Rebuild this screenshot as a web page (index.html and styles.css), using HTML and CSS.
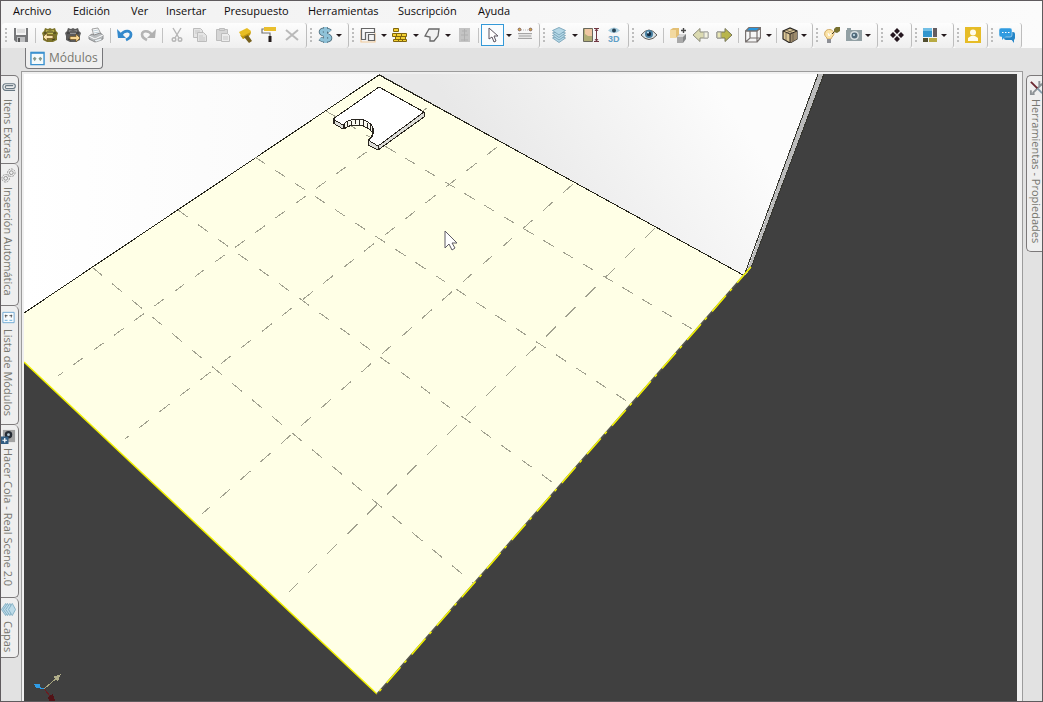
FILE: index.html
```html
<!DOCTYPE html>
<html lang="es">
<head>
<meta charset="utf-8">
<title>Módulos</title>
<link rel="stylesheet" href="styles.css">
</head>
<body>
<div class="window">
  <nav class="menu" aria-label="Menú principal">
    <button>Archivo</button><button>Edición</button><button>Ver</button><button>Insertar</button><button>Presupuesto</button><button>Herramientas</button><button>Suscripción</button><button>Ayuda</button>
  </nav>

  <div class="toolbar">
    <div class="group">
      <button class="tool" aria-label="Guardar"><svg viewBox="0 0 16 16"><path d="M1 1h14v14H3l-2-2z" fill="#77787a"/><path d="M3 1h10v7H3z" fill="#f4f4f4"/><path d="M4 3h8M4 5h8" stroke="#c8c8c8"/><path d="M4 10h8v5H4z" fill="#bdbec0"/><path d="M5 11h2v4H5z" fill="#555"/></svg></button>
      <i class="sep"></i>
      <button class="tool" aria-label="Importar módulo"><svg viewBox="0 0 16 16"><path d="M0 6l2-2 1-3 3 1 2-1 2 1 3-1 1 3 2 2-1 3v4l-4 2H5l-4-2V9z" fill="#7d752b"/><path d="M4 3l4 1 4-1-1 4H5z" fill="#c9bf59"/><path d="M2 6h3M14 6h-3M5 5h6M10 13l3-1" stroke="#3f3b1c" fill="none"/><path d="M1 10l4-4v2.500h6v3H5V14z" fill="#f8e4ae" stroke="#735520" stroke-width=".7"/></svg></button>
      <button class="tool" aria-label="Exportar módulo"><svg viewBox="0 0 16 16"><path d="M0 6l2-2 1-3 3 1 2-1 2 1 3-1 1 3 2 2-1 3v4l-4 2H5l-4-2V9z" fill="#5b5b5b"/><path d="M4 3l4 1 4-1-1 4H5z" fill="#929292"/><path d="M2 6h3M14 6h-3M5 5h6M3 12l3 1" stroke="#333" fill="none"/><path d="M15 11l-4-4v2.500H5v3h6V15z" fill="#f8d893" stroke="#735520" stroke-width=".7"/></svg></button>
      <button class="tool" aria-label="Imprimir"><svg viewBox="0 0 16 16"><path d="M4 2l6-1 3 6-7 2z" fill="#fafafa" stroke="#8a8a8a" stroke-width=".8"/><path d="M1 9l3-2 2 1 6-2 3 2v4l-8 3-6-3z" fill="#b9bdbf" stroke="#77797b" stroke-width=".8"/><path d="M1 9l6 3 8-4" fill="none" stroke="#fff"/><path d="M6 13l7-2 1 2-6 2z" fill="#e9f1f5" stroke="#888" stroke-width=".5"/><path d="M5 4l5-1M6 6l5-1" stroke="#c0d0d8"/></svg></button>
      <i class="sep"></i>
      <button class="tool" aria-label="Deshacer"><svg viewBox="0 0 16 16"><path d="M4 8c3-5 10-5 10-.5 0 3-2 4-5 5.500" fill="none" stroke="#3489cc" stroke-width="2.800"/><path d="M0 2l1 9h8z" fill="#3489cc"/></svg></button>
      <button class="tool" aria-label="Rehacer"><svg viewBox="0 0 16 16"><path d="M12 8C9 3 2 3 2 7.500c0 3 2 4 5 5.500" fill="none" stroke="#b4b4b4" stroke-width="2.600"/><path d="M16 2l-1 9H7z" fill="#b0b0b0"/></svg></button>
      <i class="sep"></i>
      <button class="tool" aria-label="Cortar"><svg viewBox="0 0 16 16" fill="none" stroke="#b6b6b6" stroke-width="1.400"><path d="M4 1l6 10M12 1L6 11"/><circle cx="5" cy="12.500" r="1.800"/><circle cx="11" cy="12.500" r="1.800"/></svg></button>
      <button class="tool" aria-label="Copiar"><svg viewBox="0 0 16 16" fill="#e4e4e4" stroke="#bcbcbc"><path d="M1.500 1.500h7l2 2v7h-9z"/><path d="M5.500 5.500h6l3 3v6h-9z"/><path d="M3 4h5M3 6h2M7 9h4M7 11h6M7 13h6" stroke="#c8c8c8"/></svg></button>
      <button class="tool" aria-label="Pegar"><svg viewBox="0 0 16 16" fill="#d6d6d6" stroke="#bdbdbd"><path d="M1.500 2.500h11v11h-11z"/><path d="M4.500 1.500h5v2h-5z"/><path d="M6.500 6.500h6l2 2v6h-8z" fill="#ececec"/><path d="M8 10h5M8 12h5" stroke="#c8c8c8"/></svg></button>
      <button class="tool" aria-label="Brocha"><svg viewBox="0 0 16 16"><path d="M1 5l8-4 4 3-1 4-7 4z" fill="#e7bd23"/><path d="M2 8l3 4 7-4 1-3-8 4z" fill="#c1970f"/><path d="M6 10l4-2 4 6-3 2z" fill="#76601d"/></svg></button>
      <button class="tool" aria-label="Rodillo"><svg viewBox="0 0 16 16"><path d="M3 0h12v4H3z" fill="#e9bf2e"/><path d="M3 2H1v4h8v3" fill="none" stroke="#737373" stroke-width="1.200"/><path d="M7.500 9h3v6h-3z" fill="#231b1b"/></svg></button>
      <button class="tool" aria-label="Eliminar"><svg viewBox="0 0 16 16"><path d="M2 3l12 10M14 3L2 13" stroke="#b9b9b9" stroke-width="2"/></svg></button>
    </div>
    <div class="group">
      <button class="tool tight" aria-label="Presupuesto"><svg viewBox="0 0 16 16"><path d="M13 4.500C11 2 4 2 4 5c0 3.500 9 2 9 6 0 3-7 3-10 .5M8.500 0v16" fill="none" stroke="#4d6b7b" stroke-width="4.600"/><path d="M13 4.500C11 2 4 2 4 5c0 3.500 9 2 9 6 0 3-7 3-10 .5M8.500 0v16" fill="none" stroke="#8fc2d8" stroke-width="3"/></svg></button><button class="caret start" aria-label="Opciones de presupuesto"></button>
    </div>
    <div class="group">
      <button class="tool" aria-label="Paredes"><svg viewBox="0 0 16 16" fill="none" stroke="#666" stroke-width="1.200"><path d="M1 3v12h5M4 15h11V6" stroke="#f0c99a"/><path d="M1.500 12.500v-11h13v4h-9v7z"/><path d="M8.500 7.500h6v6h-6z"/></svg></button><button class="caret" aria-label="Tipos de pared"></button>
      <button class="tool" aria-label="Ladrillos"><svg viewBox="0 0 16 16" fill="#f2cf32" stroke="#80650d"><path d="M1.500 1.500h5v3h-5zM.5 6.500h4v3h-4zM4.500 6.500h5v3h-5zM9.500 9.500v-3h5v3zM3.500 9.500h5v3h-5zM8.500 9.500h5v3h-5zM1.500 12.500h5v2h-5zM6.500 12.500h4v2h-4zM10.500 12.500h4v2h-4z"/></svg></button><button class="caret" aria-label="Tipos de ladrillo"></button>
      <button class="tool" aria-label="Polígono"><svg viewBox="0 0 16 16"><path d="M5 2h10l-1 7-4 5H6V10L1 9z" fill="#f1f1f1" stroke="#686868" stroke-width="1.300"/></svg></button><button class="caret" aria-label="Tipos de polígono"></button>
      <button class="tool" aria-label="Puerta"><svg viewBox="0 0 16 16"><path d="M3 1h11v14H3z" fill="#c4c4c4"/><path d="M8.500 2v12M5 8h7M5 13h7M6 4h5" stroke="#b0b0b0"/></svg></button>
      <i class="sep"></i>
      <button class="tool selected" aria-label="Seleccionar"><svg viewBox="0 0 16 16"><path d="M4 1v11l3-2 2 5 2-1-2-5h4z" fill="#fff" stroke="#5b5560"/></svg></button><button class="caret" aria-label="Tipos de selección"></button>
      <button class="tool" aria-label="Medir"><svg viewBox="0 0 16 16"><path d="M1 6h14v6H1z" fill="#e5e5e5"/><path d="M1 11.500h14M1 6.500h14M3 8v2M5 8v2M7 8v2M9 8v2M11 8v2M13 8v2" stroke="#a5a5a5"/><path d="M4 3h8" stroke="#bbb" stroke-dasharray="1 1"/><circle cx="2.500" cy="2.500" r="1.400" fill="#d4ae47" stroke="#75505a" stroke-width=".8"/><circle cx="13.500" cy="2.500" r="1.400" fill="#d4ae47" stroke="#75505a" stroke-width=".8"/></svg></button>
    </div>
    <div class="group">
      <button class="tool" aria-label="Capas"><svg viewBox="0 0 16 16" fill="#b4d7e6" stroke="#6e9cb2" stroke-width=".8"><path d="M1.500 11L8 8l6.500 3L8 15.500z"/><path d="M1.500 8.500L8 6l6.500 2.500L8 13z"/><path d="M1.500 6L8 4l6.500 2L8 10.500z"/><path d="M1.500 3.500L8 .5l6.500 3L8 8z"/></svg></button><button class="caret" aria-label="Lista de capas"></button>
      <button class="tool" aria-label="Altura"><svg viewBox="0 0 16 16"><path d="M.5 1.500h9v13h-9z" fill="#b0ad76" stroke="#69685c"/><path d="M2 2h7v7H5L2 7z" fill="#f0c7a3"/><path d="M11 1.500h5M11 14.500h5M13.500 2v12M12 4l1.500-2L15 4M12 12l1.500 2L15 12" fill="none" stroke="#713843"/></svg></button>
      <button class="tool" aria-label="Vista 3D"><svg viewBox="0 0 16 16"><path d="M2 3.500q6-6 12 0-6 5-12 0z" fill="#a9cdde"/><circle cx="8" cy="3.500" r="2" fill="#274253"/><text class="icon-text" x="2" y="15">3D</text></svg></button>
    </div>
    <div class="group wide">
      <button class="tool" aria-label="Ver"><svg viewBox="0 0 16 16"><path d="M0 8q8-10 16 0-8 9-16 0z" fill="#dce5e9" stroke="#615d59"/><circle cx="8" cy="7" r="4" fill="#477fa1"/><circle cx="8" cy="7" r="2.200" fill="#162d42"/><circle cx="7" cy="5.500" r="1" fill="#d4f0ff"/></svg></button>
      <i class="sep"></i>
      <button class="tool" aria-label="Intercambiar módulos"><svg viewBox="0 0 16 16"><path d="M0 3l3-2h6v7l-3 3H0z" fill="#e3bf74"/><path d="M0 3h6v8H0z" fill="#f2d9a0"/><path d="M7 10l3-3h6v5l-3 4H7z" fill="#858788"/><path d="M7 10l3-3h6l-3 3z" fill="#d7d7d7"/><path d="M7 10h6v6H7z" fill="#aaa"/><path d="M13.500 1v5M11 3.500h5" stroke="#474747" stroke-width="1.400"/></svg></button>
      <button class="tool" aria-label="Anterior"><svg viewBox="0 0 16 16"><path d="M0 8l7-6.500V5h8v6H7v3.500z" fill="#dbdab1" stroke="#8b8b7a"/><path d="M11 5h4v6h-4z" fill="#f3f2df" stroke="#aaa"/></svg></button>
      <button class="tool" aria-label="Siguiente"><svg viewBox="0 0 16 16"><path d="M16 8L9 1.500V5H1v6h8v3.500z" fill="#b8b54c" stroke="#767658"/><path d="M1 5h4v6H1z" fill="#e9e7b4" stroke="#999"/></svg></button>
      <i class="sep"></i>
      <button class="tool" aria-label="Perspectiva"><svg viewBox="0 0 16 16" fill="none" stroke="#77716f" stroke-width="1.200"><path d="M4 .5h11.500L12 4H.5z" fill="#2996dc"/><path d="M.6 4H12v11H.6zM12 4l3.500-3.500V11L12 15M.6 15L5 11h10M5 11V4"/></svg></button><button class="caret" aria-label="Tipos de perspectiva"></button>
      <i class="sep"></i>
      <button class="tool tight" aria-label="Caja"><svg viewBox="0 0 16 16"><path d="M1 4l7-3 7 3v8l-7 4-7-4z" fill="#dcc898" stroke="#282522" stroke-width="1.200"/><path d="M8 7l7-3v8l-7 4z" fill="#9c8a6c"/><path d="M1 4l7 3 7-3M8 7v9" fill="none" stroke="#2f2923"/><path d="M4 3l7 3v8M12 3L4 6v8" fill="none" stroke="#5b5042" stroke-width=".7"/></svg></button><button class="caret start" aria-label="Tipos de caja"></button>
    </div>
    <div class="group">
      <button class="tool" aria-label="Iluminación"><svg viewBox="0 0 16 16"><path d="M3 11C1 9 0 8 1 5c2-4 8-3 9 1 0 3-2 3-3 6H3z" fill="#fbe3a7" stroke="#d0aa65"/><path d="M3 12h4v4H3z" fill="#8d8f96"/><path d="M4 6l1 3 2-3" fill="none" stroke="#fff"/><path d="M8 7l3-3" stroke="#443e25"/><path d="M10 2l2-2h4v4l-3 2-3-1z" fill="#77702f"/></svg></button>
      <button class="tool tight" aria-label="Cámara"><svg viewBox="0 0 16 16"><path d="M0 3h1V1h4v2h11v11H0z" fill="#92a0a4"/><circle cx="8.500" cy="8.500" r="4.500" fill="#d9e0e3"/><circle cx="8.500" cy="8.500" r="3" fill="#526b7b"/><circle cx="8" cy="8" r="1" fill="#d2ebf6"/></svg></button><button class="caret start" aria-label="Opciones de cámara"></button>
    </div>
    <div class="group">
      <button class="tool" aria-label="Componentes"><svg viewBox="0 0 16 16" fill="#24161f"><path d="M8 1l3 3-3 3-3-3zM8 9l3 3-3 3-3-3zM4 5l3 3-3 3-3-3zM12 5l3 3-3 3-3-3z"/></svg></button>
    </div>
    <div class="group">
      <button class="tool tight" aria-label="Disposición"><svg viewBox="0 0 16 16"><path d="M1 1h9v9H1z" fill="#3296ce"/><path d="M1 1h9v3H1z" fill="#72bfe5"/><path d="M11 1h4v9h-4z" fill="#635c60"/><path d="M1 11h5v4H1z" fill="#524e30"/><path d="M7 11h8v4H7z" fill="#b7aa43"/></svg></button><button class="caret start" aria-label="Tipos de disposición"></button>
    </div>
    <div class="group">
      <button class="tool" aria-label="Usuario"><svg viewBox="0 0 16 16"><path d="M0 0h16v16H0z" fill="#e6bc27"/><circle cx="8" cy="5.500" r="3" fill="#fffbea"/><path d="M3 14v-3l3-2h4l3 2v3z" fill="#fffbea"/></svg></button>
    </div>
    <div class="group">
      <button class="tool" aria-label="Mensajes"><svg viewBox="0 0 16 16"><rect x="5" y="5" width="11" height="8" rx="2" fill="#2485c7"/><path d="M12 12l3 4v-5z" fill="#2485c7"/><rect x="0" y="1" width="13" height="9" rx="2" fill="#309be0" stroke="#f3f8fb" stroke-width=".5"/><path d="M3 9v4l4-4z" fill="#309be0"/><path d="M3 5.500h1.500M6 5.500h1.500M9 5.500h1.500" stroke="#fff" stroke-width="1.200"/></svg></button>
    </div>
  </div>

  <div class="tabstrip">
    <button class="doc-tab"><svg viewBox="0 0 16 16"><path d="M1 1.500h14v13H1z" fill="#f4fafb" stroke="#3a91cf" stroke-width="1.500"/><path d="M1 2h14" stroke="#3a91cf" stroke-width="2"/><path d="M5 6l-2 2 2 3zM5 6l2 2-2 3zM11 6L9 8l2 3zM11 6l2 2-2 3z" fill="#87998c"/></svg>Módulos</button>
  </div>

  <div class="body">
    <aside class="side left">
      <button class="side-tab items"><svg viewBox="0 0 16 16" fill="none" stroke="#687883" stroke-width="1.200"><path d="M15 11H5c-4 0-4-7 0-7h8c3 0 3 5 0 5H6c-2 0-2-3 0-3h7"/></svg>Itens Extras</button>
      <button class="side-tab auto"><svg viewBox="0 0 16 16" fill="none" stroke="#8d8d8d"><circle cx="11" cy="5" r="4" stroke-dasharray="2 1"/><circle cx="11" cy="5" r="2"/><circle cx="5" cy="11" r="4" stroke-dasharray="2 1"/><circle cx="5" cy="11" r="2"/></svg>Inserción Automática</button>
      <button class="side-tab modules"><svg viewBox="0 0 16 16"><path d="M2 2.500h12v11H2z" fill="#f8fbfd" stroke="#70a9d3"/><path d="M5 5v3M11 5v3M4 6h3M9 6h3" stroke="#555"/><path d="M4 11h3M9 11h3" stroke="#61aad8"/></svg>Lista de Módulos</button>
      <button class="side-tab queue"><svg viewBox="0 0 16 16"><path d="M2 1h13v13H2z" fill="#a2a2a2"/><circle cx="8" cy="6" r="4" fill="#252b34"/><circle cx="8" cy="6" r="1.500" fill="#b7cad5"/><path d="M0 8h8v8H0z" fill="#315d83"/><path d="M4 9.500v5M1.500 12h5" stroke="#fff" stroke-width="1.300"/></svg>Hacer Cola - Real Scene 2.0</button>
      <button class="side-tab layers"><svg viewBox="0 0 16 16" fill="#bedbe8" stroke="#72a4bc" stroke-width=".8"><path d="M5 1.500L8 8l-3 6.500L.5 8z"/><path d="M7 1.500L10 8l-3 6.500L2.500 8z"/><path d="M9.500 1.500l3 6.500-3 6.500L5 8z"/><path d="M12 1.500L15.500 8 12 14.500 8 8z"/></svg>Capas</button>
    </aside>

    <main class="frame">
      <svg class="scene" viewBox="24 74 993 627" preserveAspectRatio="xMidYMid slice" shape-rendering="crispEdges" role="img" aria-label="Plano de la habitación">
        <defs>
          <linearGradient id="wall-r" gradientUnits="userSpaceOnUse" x1="480" y1="150" x2="670" y2="20"><stop offset="0" stop-color="#e8e8e8"/><stop offset=".55" stop-color="#f3f3f3"/><stop offset="1" stop-color="#fcfcfc"/></linearGradient>
          <linearGradient id="wall-l" x1="0" x2="1"><stop offset="0" stop-color="#fff"/><stop offset="1" stop-color="#f9f9f9"/></linearGradient>
        </defs>
        <path d="M0 0h1100v800H0z" fill="#404040"/>
        <path d="M24 74h355v2L24 313z" fill="url(#wall-l)"/>
        <path d="M379 74h439l-73 202z" fill="url(#wall-r)"/>
        <path d="M379 75l366 201 6-9-374 427L24 362v-49z" fill="#ffffe6"/>
        <path d="M818 74h6l-73 194-6 8z" fill="#bcbcbc"/>
        <path d="M818 74l-74 202" fill="none" stroke="#35352e"/>
        <path d="M824 74l-73 194" fill="none" stroke="#35352e"/>
        <path d="M24 313L379 75l366 201" fill="none" stroke="#25251b"/>
        <g fill="none" stroke="#a1a18f">
          <path d="M326 111l368 219" stroke-dasharray="12 11"/>
          <path d="M255 157l373 245" stroke-dasharray="12 12"/>
          <path d="M178 210l374 272" stroke-dasharray="12 13"/>
          <path d="M92 267l381 316" stroke-dasharray="13 13"/>
          <path d="M427 108L58 376" stroke-dasharray="12 13"/>
          <path d="M497 147L125 439" stroke-dasharray="13 13"/>
          <path d="M573 184L202 514" stroke-dasharray="13 14"/>
          <path d="M655 228L289 592" stroke-dasharray="14 14"/>
        </g>
        <g fill="none" shape-rendering="auto">
          <path d="M24 362l353 332" stroke="#f0f000" stroke-width="1.500"/>
          <path d="M751 267L377 694" stroke="#55554a" stroke-width="1.500"/>
          <path d="M751 267L377 694" stroke="#f4f400" stroke-width="1.500" stroke-dasharray="21 8 3 6"/>
        </g>
        <g stroke="#29251f" stroke-linejoin="round">
          <path d="M379 87l45 25v5l-46 33-10-5v-5l3-3c5-8-3-16-14-15-6 0-13 2-14 6v1l-10-6v-4z" fill="#deded9"/>
          <path d="M379 87l45 25-46 34-10-6c6-3 6-9 5-12-5-12-25-10-30-3l-10-6z" fill="#fff"/>
          <path d="M378 146v4M424 112v5M334 119v4M343 125v4" fill="none"/>
          <path d="M344 124c5-6 22-8 29 3l-1 5c-6-8-21-9-28-3z" fill="#f8f8ef"/>
          <path d="M347 122v5M351 121v4M355 120v4M359 120v5M363 121v5M367 123v5M370 125v6" fill="none"/>
        </g>
        <path d="M445 231v17l4-4 3 6 3-2-3-5h5z" fill="#fff" stroke="#5e5b64" shape-rendering="auto"/>
        <g fill="none"><path d="M44 689l14-12" stroke="#a9a780"/><path d="M44 689l-7-2" stroke="#2f9be4"/><path d="M44 689l7 8" stroke="#6b1c21"/></g>
        <path d="M61 674l-3 7-5-4z" fill="#b0ad89"/><path d="M34 684h6v4h-4z" fill="#2f9be4"/><path d="M53 694l2 7h-6l-1-4z" fill="#521317"/>
      </svg>
    </main>

    <aside class="side right">
      <button class="side-tab properties"><svg viewBox="0 0 16 16" fill="none"><path d="M4 14L14 4M11 1v4h4M2 11v4h4" stroke="#8d9296" stroke-width="2"/><path d="M2 2l7 7" stroke="#6b2831" stroke-width="2"/><path d="M9 9l5 5" stroke="#849aaa" stroke-width="2"/></svg>Herramientas - Propiedades</button>
    </aside>
  </div>
</div>
</body>
</html>
```

FILE: styles.css
```css
* { box-sizing: border-box; }
html, body { height: 100%; margin: 0; }
body { font: 11px/16px "Open Sans", "Noto Sans", sans-serif; color: #241f20; }
button { margin: 0; padding: 0; border: 0; background: none; font: inherit; color: inherit; }
svg { display: block; }

.window {
  display: flex;
  flex-direction: column;
  height: 100vh;
  overflow: hidden;
  border: 1px solid #5f5b5e;
  background: #e2e2e2;
}

.menu {
  display: grid;
  grid-template-columns: 60px 58px 35px 58px 84px 90px 80px 1fr;
  flex: none;
  height: 22px;
  padding-left: 12px;
  background: linear-gradient(90deg, #f1f1f1, #fbfbfb);
}
.menu button { text-align: left; white-space: nowrap; padding-bottom: 2px; color: #0d0a0b; }

.toolbar {
  display: flex;
  flex: none;
  height: 25px;
  padding-left: 1px;
  background: linear-gradient(90deg, #f1f1f1, #fbfbfb);
}
.group {
  display: flex;
  align-items: center;
  flex: none;
  padding-right: 3px;
  padding-bottom: 1px;
  border-right: 1px solid #bdbdbd;
  border-radius: 3px;
  background: linear-gradient(#fdfdfd, #efefef);
}
.group::before {
  content: "";
  width: 2px;
  height: 14px;
  margin: 0 2px 0 3px;
  background: repeating-linear-gradient(#bdbdbd 0 2px, transparent 2px 4px);
}
.group.wide { padding-right: 2px; }
.group.wide::before { margin-right: 3px; }
.tool { display: grid; place-items: center; width: 23px; height: 22px; }
.tool svg { width: 16px; height: 16px; }
.tool.tight { width: 22px; }
.tool.selected { border: 1px solid #3399d8; background: #f9fcfe; }
.caret { display: flex; align-items: center; justify-content: center; width: 9px; height: 22px; }
.caret.start { justify-content: flex-start; }
.caret::before { content: ""; border: 3px solid transparent; border-top-color: #241a1d; border-bottom: 0; }
.sep { width: 1px; height: 15px; margin: 0 2px 0 3px; background: #c2c2c2; }
.icon-text { font: bold 9px "Liberation Sans", sans-serif; fill: #5f9fc7; }

.tabstrip { flex: none; height: 23px; padding-left: 24px; }
.doc-tab {
  display: flex;
  align-items: center;
  gap: 4px;
  height: 21px;
  padding: 0 4px;
  border: 1px solid #77777a;
  border-top: 0;
  border-radius: 0 0 4px 4px;
  background: #efefef;
  color: #77776f;
  font-size: 12px;
}
.doc-tab svg { width: 15px; height: 15px; }

.body { display: flex; flex: 1; min-height: 0; }
.side { display: flex; flex-direction: column; flex: none; padding-top: 4px; overflow: hidden; }
.left { width: 20px; }
.right { width: 19px; padding-left: 3px; }
.side-tab {
  display: flex;
  align-items: center;
  flex: none;
  gap: 4px;
  width: 18px;
  padding: 4px 3px 4px 0;
  border: 1px solid #7c797a;
  border-left: 0;
  border-radius: 0 5px 5px 0;
  background: #efefef;
  color: #77776f;
  writing-mode: vertical-rl;
  white-space: nowrap;
  line-height: 14px;
}
.side-tab + .side-tab { border-top: 0; }
.side-tab svg { flex: none; width: 15px; height: 15px; }
.items { height: 89px; }
.auto { height: 142px; }
.modules { height: 119px; }
.queue { height: 173px; }
.layers { height: 60px; }
.properties {
  height: 177px;
  padding: 4px 0 4px 1px;
  border-left: 1px solid #7c797a;
  border-right: 0;
  border-radius: 5px 0 0 5px;
}

.frame {
  flex: 1;
  min-width: 0;
  padding: 2px 5px 0 2px;
  border: 1px solid #9c9c9c;
  border-bottom: 0;
  background: #f0f0f0;
}
.scene { width: 100%; height: 100%; }
```
